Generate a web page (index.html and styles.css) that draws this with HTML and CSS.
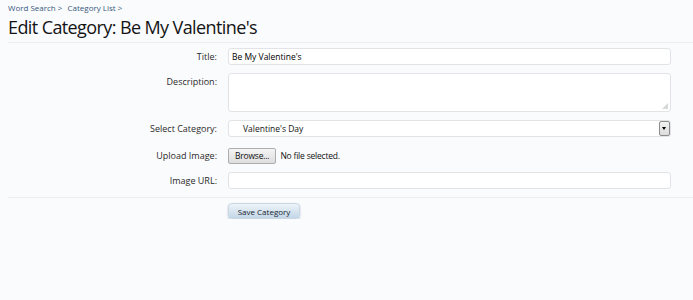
FILE: index.html
```html
<!DOCTYPE html>
<html lang="en">
<head>
  <meta charset="UTF-8">
  <title>Edit Category: Be My Valentine's</title>
  <link rel="stylesheet" href="styles.css">
</head>
<body>

<div class="crumbs">
  <a href="#">Word Search</a> <span class="sep">&gt;</span>
  <a href="#">Category List</a> <span class="sep">&gt;</span>
</div>

<h1 class="title">Edit Category: Be My Valentine's</h1>

<form class="editForm">
  <div class="row">
    <label for="title">Title:</label>
    <input type="text" id="title" class="field" value="Be My Valentine's">
  </div>

  <div class="row">
    <label for="description">Description:</label>
    <div class="areaWrap">
      <textarea id="description" class="field area"></textarea>
      <span class="grip"></span>
    </div>
  </div>

  <div class="row">
    <label for="category">Select Category:</label>
    <div class="selectBox">
      <span class="selectText">Valentine's Day</span>
      <span class="selectArrow"></span>
    </div>
  </div>

  <div class="row rowUpload">
    <label>Upload Image:</label>
    <div class="upload">
      <span class="browse">Browse...</span>
      <span class="nofile">No file selected.</span>
    </div>
  </div>

  <div class="row">
    <label for="imageUrl">Image URL:</label>
    <input type="text" id="imageUrl" class="field">
  </div>

  <div class="submitUnit">
    <button type="button" class="saveBtn">Save Category</button>
  </div>
</form>

</body>
</html>
```

FILE: styles.css
```css
body {
  margin: 0;
  padding: 0 0 0 8px;
  background-color: #fafbfd;
  color: #141414;
  font-family: "Open Sans", Tahoma, sans-serif;
  font-size: 9px;
}
.crumbs {
  padding-top: 2px;
  height: 12px;
  line-height: 12px;
  font-size: 8px;
}
.crumbs a {
  color: #35587a;
  text-decoration: none;
}
.crumbs .sep {
  color: #35587a;
  margin-right: 3px;
}
.title {
  margin: 0;
  padding: 3px 0 5px;
  font-size: 18px;
  letter-spacing: -0.6px;
  font-weight: normal;
  line-height: 20px;
  color: #141414;
  border-bottom: 1px solid #eceef2;
}
.editForm {
  padding-top: 5px;
}
.row {
  display: flex;
  align-items: flex-start;
  margin-bottom: 8px;
}
.rowUpload {
  margin-top: 10px;
}
.row label {
  width: 209px;
  padding-right: 11px;
  text-align: right;
  line-height: 17px;
  color: #2a2a2a;
}
.field {
  box-sizing: border-box;
  width: 443px;
  height: 17px;
  margin: 0;
  padding: 0 3px;
  background: #fff;
  border: 1px solid #e1e3e7;
  border-radius: 3px;
  font-family: inherit;
  font-size: 8.5px;
  color: #000;
}
.areaWrap {
  position: relative;
  height: 39px;
}
.area {
  height: 39px;
  resize: none;
  display: block;
}
.grip {
  position: absolute;
  right: 3px;
  bottom: 3px;
  width: 6px;
  height: 6px;
  background: radial-gradient(circle, #aaa 0.6px, transparent 0.8px) 0 0 / 2px 2px;
  clip-path: polygon(100% 0, 100% 100%, 0 100%);
}
.selectBox {
  box-sizing: border-box;
  width: 443px;
  height: 17px;
  display: flex;
  align-items: center;
  background: #fff;
  border: 1px solid #e1e3e7;
  border-radius: 3px;
}
.selectText {
  flex: 1;
  padding-left: 14px;
  font-size: 8.5px;
}
.selectArrow {
  width: 11px;
  height: 15px;
  box-sizing: border-box;
  border: 1px solid #8c8c8c;
  border-radius: 2px;
  background: linear-gradient(#f2f2f2, #dcdcdc);
  position: relative;
}
.selectArrow::after {
  content: "";
  position: absolute;
  left: 2px;
  top: 5px;
  border-left: 2.5px solid transparent;
  border-right: 2.5px solid transparent;
  border-top: 3px solid #000;
}
.upload {
  display: flex;
  align-items: center;
  gap: 4px;
  height: 17px;
}
.browse {
  box-sizing: border-box;
  height: 16px;
  padding: 0 6px;
  line-height: 14px;
  border: 1px solid #adadad;
  border-radius: 2px;
  background: linear-gradient(#f4f4f4, #dedede);
  font-size: 8.5px;
  letter-spacing: -0.2px;
  color: #111;
}
.nofile {
  font-size: 8.5px;
  letter-spacing: -0.2px;
  color: #111;
}
.submitUnit {
  border-top: 1px solid #e8f0f4;
  margin-top: 7px;
  padding: 5px 0 0 220px;
}
.saveBtn {
  width: 72px;
  height: 16px;
  padding: 0;
  border: 1px solid #c7d6e3;
  border-radius: 4px;
  background: linear-gradient(#eef4f9, #c3d6e7);
  box-shadow: 0 1px 2px rgba(80, 110, 140, 0.4);
  font-family: inherit;
  font-size: 8px;
  color: #14222e;
}
```
